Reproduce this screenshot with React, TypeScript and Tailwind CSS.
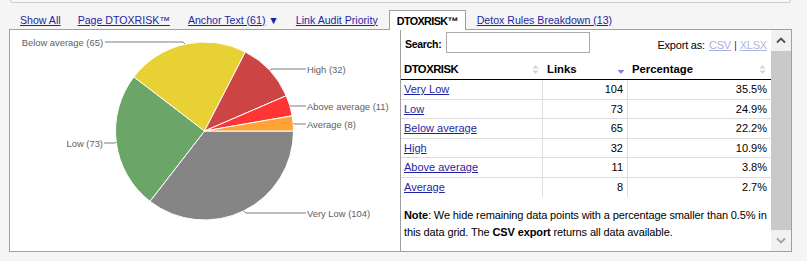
import React from 'react';

type Slice = { name: string; value: number; color: string };

const slices: Slice[] = [
  { name: 'Very Low', value: 104, color: '#858585' },
  { name: 'Low', value: 73, color: '#6ba668' },
  { name: 'Below average', value: 65, color: '#e7d134' },
  { name: 'High', value: 32, color: '#cc4444' },
  { name: 'Above average', value: 11, color: '#ff3434' },
  { name: 'Average', value: 8, color: '#ffa334' },
];

const labels = [
  { text: 'Below average (65)', anchor: 'end', x: 103, y: 42, pts: '185,44 183,42 105,42' },
  { text: 'High (32)', anchor: 'start', x: 307, y: 69, pts: '269.6,70.3 272,69 306,69' },
  { text: 'Above average (11)', anchor: 'start', x: 307, y: 106, pts: '289.8,105.6 292,106 306,106' },
  { text: 'Average (8)', anchor: 'start', x: 307, y: 124, pts: '293.2,123.4 295,124 306,124' },
  { text: 'Very Low (104)', anchor: 'start', x: 307, y: 213, pts: '243.6,211 246,213 306,213' },
  { text: 'Low (73)', anchor: 'end', x: 103, y: 143, pts: '116.2,142.5 114,143 104,143' },
];

const rows = [
  { name: 'Very Low', links: 104, pct: '35.5%' },
  { name: 'Low', links: 73, pct: '24.9%' },
  { name: 'Below average', links: 65, pct: '22.2%' },
  { name: 'High', links: 32, pct: '10.9%' },
  { name: 'Above average', links: 11, pct: '3.8%' },
  { name: 'Average', links: 8, pct: '2.7%' },
];

function PieChart() {
  const cx = 204.5;
  const cy = 131;
  const r = 89;
  const total = slices.reduce((s, x) => s + x.value, 0);
  let start = 0;

  const paths = slices.map((s) => {
    const a0 = (start / total) * Math.PI * 2;
    start += s.value;
    const a1 = (start / total) * Math.PI * 2;
    const x0 = cx + r * Math.cos(a0);
    const y0 = cy + r * Math.sin(a0);
    const x1 = cx + r * Math.cos(a1);
    const y1 = cy + r * Math.sin(a1);
    const large = a1 - a0 > Math.PI ? 1 : 0;
    const d = `M${cx},${cy} L${x0},${y0} A${r},${r} 0 ${large} 1 ${x1},${y1} Z`;
    return <path key={s.name} d={d} fill={s.color} stroke="#ffffff" strokeWidth={1} strokeLinejoin="round" />;
  });

  return (
    <svg width="390" height="221" viewBox="10 30 390 221">
      {paths}
      {labels.map((l) => (
        <g key={l.text}>
          <polyline points={l.pts} fill="none" stroke="#7f7f7f" strokeWidth={1} />
          <text
            x={l.x}
            y={l.y + 3.5}
            textAnchor={l.anchor as 'start' | 'end'}
            fill="#606060"
            fontSize="9.4"
            fontFamily="'Liberation Sans', Arial, sans-serif"
          >
            {l.text}
          </text>
        </g>
      ))}
    </svg>
  );
}

function SortBoth() {
  return (
    <svg width="7" height="11" viewBox="0 0 7 11">
      <path d="M3.5 1 L6.5 4.5 L0.5 4.5 Z" fill="#d4d4d4" />
      <path d="M3.5 10 L6.5 6.5 L0.5 6.5 Z" fill="#d4d4d4" />
    </svg>
  );
}

function SortDown() {
  return (
    <svg width="8" height="11" viewBox="0 0 8 11">
      <path d="M0.5 6 L7.5 6 L4 10 Z" fill="#7d87e0" />
    </svg>
  );
}

export default function App() {
  return (
    <div className="w-[807px] h-[261px] overflow-hidden bg-[#f5f5f5] font-['Liberation_Sans',Arial,sans-serif] text-[11px] text-black">
      {/* bottom edge of the box above */}
      <div className="ml-[10px] w-[781px] h-[3px] border border-t-0 border-[#cfcfcf] rounded-b-[3px] bg-[#f7f7f7]" />

      {/* tabs */}
      <div className="relative z-10 mt-[7px] ml-[9px] pl-[11px] h-[20px] flex items-stretch text-[10.6px]">
        <a href="#" className="self-center mt-[1px] text-[#1f1fa3] underline">Show All</a>
        <a href="#" className="self-center mt-[1px] ml-[17px] text-[#1f1fa3] underline">Page DTOXRISK™</a>
        <span className="self-center mt-[1px] ml-[18px] text-[#1f1fa3]">
          <a href="#" className="underline">Anchor Text (61)</a> ▼
        </span>
        <a href="#" className="self-center mt-[1px] ml-[17px] text-[#1f1fa3] underline">Link Audit Priority</a>
        <div className="ml-[11px] px-[7px] flex items-center pt-[1px] bg-white border border-b-0 border-[#a0a0a0] font-bold text-[10.8px] tracking-[-0.6px]">
          DTOXRISK™
        </div>
        <a href="#" className="self-center mt-[1px] ml-[11px] text-[#1f1fa3] underline">Detox Rules Breakdown (13)</a>
      </div>

      {/* panel */}
      <div className="-mt-px ml-[9px] w-[783px] h-[223px] border border-[#a0a0a0] bg-white flex">
        <div className="w-[391px] h-full border-r border-[#a0a0a0]">
          <PieChart />
        </div>

        <div className="w-[370px] h-full flex flex-col">
          <div className="h-[28px] flex items-start pt-[2px]">
            <span className="ml-[4px] mt-[5px] font-bold text-[10.5px] tracking-[-0.3px]">Search:</span>
            <input className="ml-[5px] w-[144px] h-[21px] border border-[#a9a9a9] outline-none" />
            <div className="ml-auto mr-[4px] mt-[5px] flex items-center tracking-[-0.2px]">
              <span>Export as:</span>
              <a href="#" className="ml-[4px] text-[#a9addb] underline">CSV</a>
              <span className="mx-[3px] text-[#34348f]">|</span>
              <a href="#" className="text-[#b1b5dd] underline">XLSX</a>
            </div>
          </div>

          <div className="h-[22px] flex border-b border-black font-bold text-[11.3px]">
            <div className="w-[142px] flex items-center justify-between pl-[3px] pr-[4px] pt-[2px]">
              <span className="tracking-[-0.5px]">DTOXRISK</span>
              <SortBoth />
            </div>
            <div className="w-[85px] flex items-center justify-between pl-[4px] pr-[3px] pt-[2px]">
              <span>Links</span>
              <SortDown />
            </div>
            <div className="w-[143px] flex items-center justify-between pl-[4px] pr-[5px] pt-[2px]">
              <span>Percentage</span>
              <SortBoth />
            </div>
          </div>

          {rows.map((row, i) => (
            <div
              key={row.name}
              className={`h-[19.5px] flex ${i < rows.length - 1 ? 'border-b border-[#dddddd]' : ''}`}
            >
              <div className="w-[142px] flex items-center pl-[3px] border-r border-[#dddddd]">
                <a href="#" className="text-[#1f1fa3] underline">{row.name}</a>
              </div>
              <div className="w-[85px] flex items-center justify-end pr-[4px] border-r border-[#dddddd]">
                {row.links}
              </div>
              <div className="w-[143px] flex items-center justify-end pr-[4px]">{row.pct}</div>
            </div>
          ))}

          <p className="mt-[10px] pl-[3px] pr-0 leading-[17px] tracking-[-0.12px]">
            <b>Note</b>: We hide remaining data points with a percentage smaller than 0.5% in this data grid. The{' '}
            <b>CSV export</b> returns all data available.
          </p>
        </div>

        {/* scrollbar */}
        <div className="w-[20px] h-full bg-[#f1f1f1] flex flex-col">
          <div className="h-[21px] flex items-center justify-center">
            <svg width="10" height="7" viewBox="0 0 10 7">
              <path d="M1 5.5 L5 1.5 L9 5.5" fill="none" stroke="#505050" strokeWidth="1.8" />
            </svg>
          </div>
          <div className="flex-1 bg-[#c9c9c9]" />
          <div className="h-[21px] flex items-center justify-center">
            <svg width="10" height="7" viewBox="0 0 10 7">
              <path d="M1 1.5 L5 5.5 L9 1.5" fill="none" stroke="#a3a3a3" strokeWidth="1.8" />
            </svg>
          </div>
        </div>
      </div>
    </div>
  );
}
